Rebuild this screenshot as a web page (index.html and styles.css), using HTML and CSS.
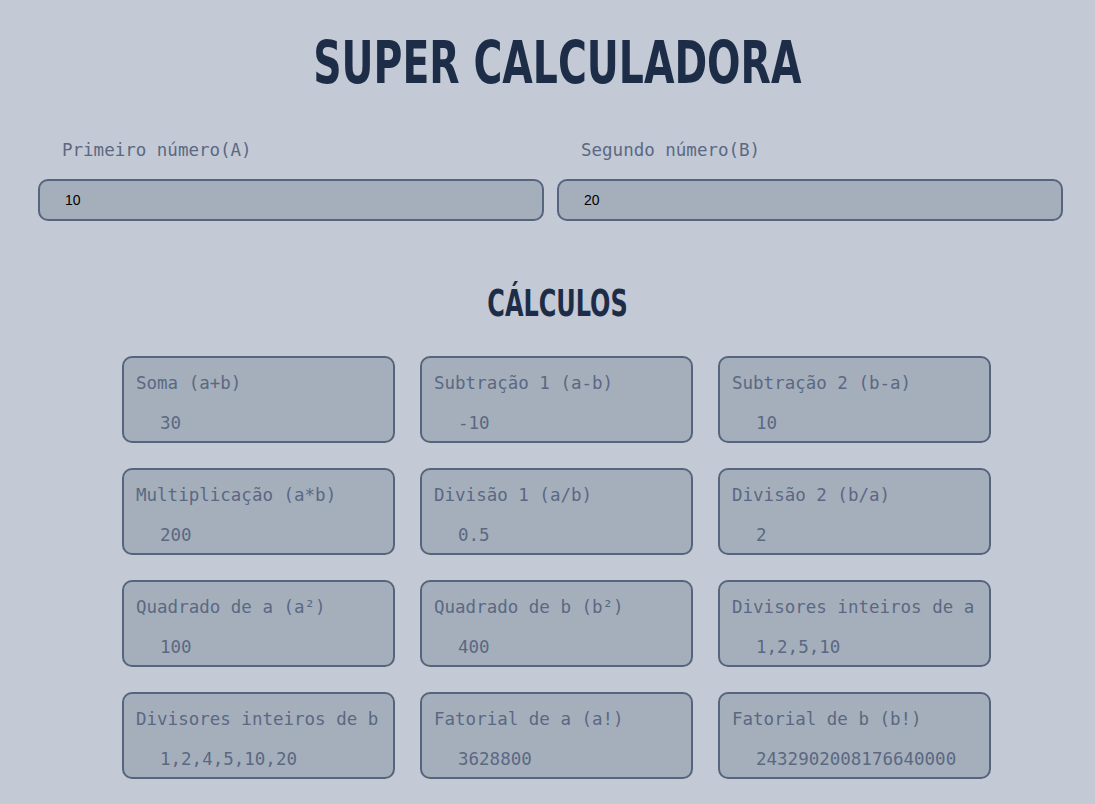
FILE: index.html
```html
<!DOCTYPE html>
<html lang="pt-BR">
<head>
<meta charset="utf-8">
<title>Super Calculadora</title>
<link rel="stylesheet" href="styles.css">
</head>
<body>
<main class="page">
  <h1 class="title">SUPER CALCULADORA</h1>
  <section class="inputs">
    <div class="field">
      <label class="field-label" for="a">Primeiro número(A)</label>
      <input class="field-input" id="a" type="text" value="10">
    </div>
    <div class="field">
      <label class="field-label" for="b">Segundo número(B)</label>
      <input class="field-input" id="b" type="text" value="20">
    </div>
  </section>
  <h2 class="subtitle">CÁLCULOS</h2>
  <section class="grid">
    <div class="card"><div class="card-label">Soma (a+b)</div><div class="card-value">30</div></div>
    <div class="card"><div class="card-label">Subtração 1 (a-b)</div><div class="card-value">-10</div></div>
    <div class="card"><div class="card-label">Subtração 2 (b-a)</div><div class="card-value">10</div></div>
    <div class="card"><div class="card-label">Multiplicação (a*b)</div><div class="card-value">200</div></div>
    <div class="card"><div class="card-label">Divisão 1 (a/b)</div><div class="card-value">0.5</div></div>
    <div class="card"><div class="card-label">Divisão 2 (b/a)</div><div class="card-value">2</div></div>
    <div class="card"><div class="card-label">Quadrado de a (a²)</div><div class="card-value">100</div></div>
    <div class="card"><div class="card-label">Quadrado de b (b²)</div><div class="card-value">400</div></div>
    <div class="card"><div class="card-label">Divisores inteiros de a</div><div class="card-value">1,2,5,10</div></div>
    <div class="card"><div class="card-label">Divisores inteiros de b</div><div class="card-value">1,2,4,5,10,20</div></div>
    <div class="card"><div class="card-label">Fatorial de a (a!)</div><div class="card-value">3628800</div></div>
    <div class="card"><div class="card-label">Fatorial de b (b!)</div><div class="card-value">2432902008176640000</div></div>
  </section>
</main>
</body>
</html>
```

FILE: styles.css
```css
html, body {
  margin: 0;
  padding: 0;
  background: #c3cad5;
}
body {
  font-family: "DejaVu Sans Mono", "Liberation Mono", monospace;
  color: #5b6883;
}
.page {
  display: flex;
  flex-direction: column;
  align-items: center;
  padding-top: 30px;
}
.title {
  margin: 0 0 0 20px;
  font-family: "DejaVu Sans Condensed", "DejaVu Sans", sans-serif;
  font-weight: 700;
  font-size: 58px;
  line-height: 66px;
  color: #1e2d47;
  transform: scaleX(0.755);
  white-space: nowrap;
}
.inputs {
  display: flex;
  gap: 13px;
  margin-top: 43px;
  margin-left: 6px;
  width: 1025px;
}
.field {
  flex: 1;
  display: flex;
  flex-direction: column;
}
.field-label {
  font-size: 17.5px;
  line-height: 22px;
  padding-left: 24px;
  margin-bottom: 18px;
}
.field-input {
  box-sizing: border-box;
  height: 42px;
  border: 2px solid #56647e;
  border-radius: 10px;
  background: #a5afbb;
  font-family: Arial, "Liberation Sans", sans-serif;
  font-size: 14px;
  color: #000;
  padding: 0 25px;
  outline: none;
}
.subtitle {
  margin: 61px 0 0 20px;
  font-family: "DejaVu Sans Condensed", "DejaVu Sans", sans-serif;
  font-weight: 700;
  font-size: 37px;
  line-height: 44px;
  color: #1e2d47;
  transform: scaleX(0.72);
  white-space: nowrap;
}
.grid {
  display: grid;
  grid-template-columns: repeat(3, 273px);
  column-gap: 25px;
  row-gap: 25px;
  margin-top: 30px;
  padding-left: 18px;
}
.card {
  box-sizing: border-box;
  height: 87px;
  border: 2px solid #56647e;
  border-radius: 10px;
  background: #a5afbb;
  padding: 14px 12px 0;
}
.card-label {
  font-size: 17.5px;
  line-height: 22px;
  white-space: nowrap;
}
.card-value {
  font-size: 17.5px;
  line-height: 22px;
  margin-top: 18px;
  padding-left: 24px;
}
```
